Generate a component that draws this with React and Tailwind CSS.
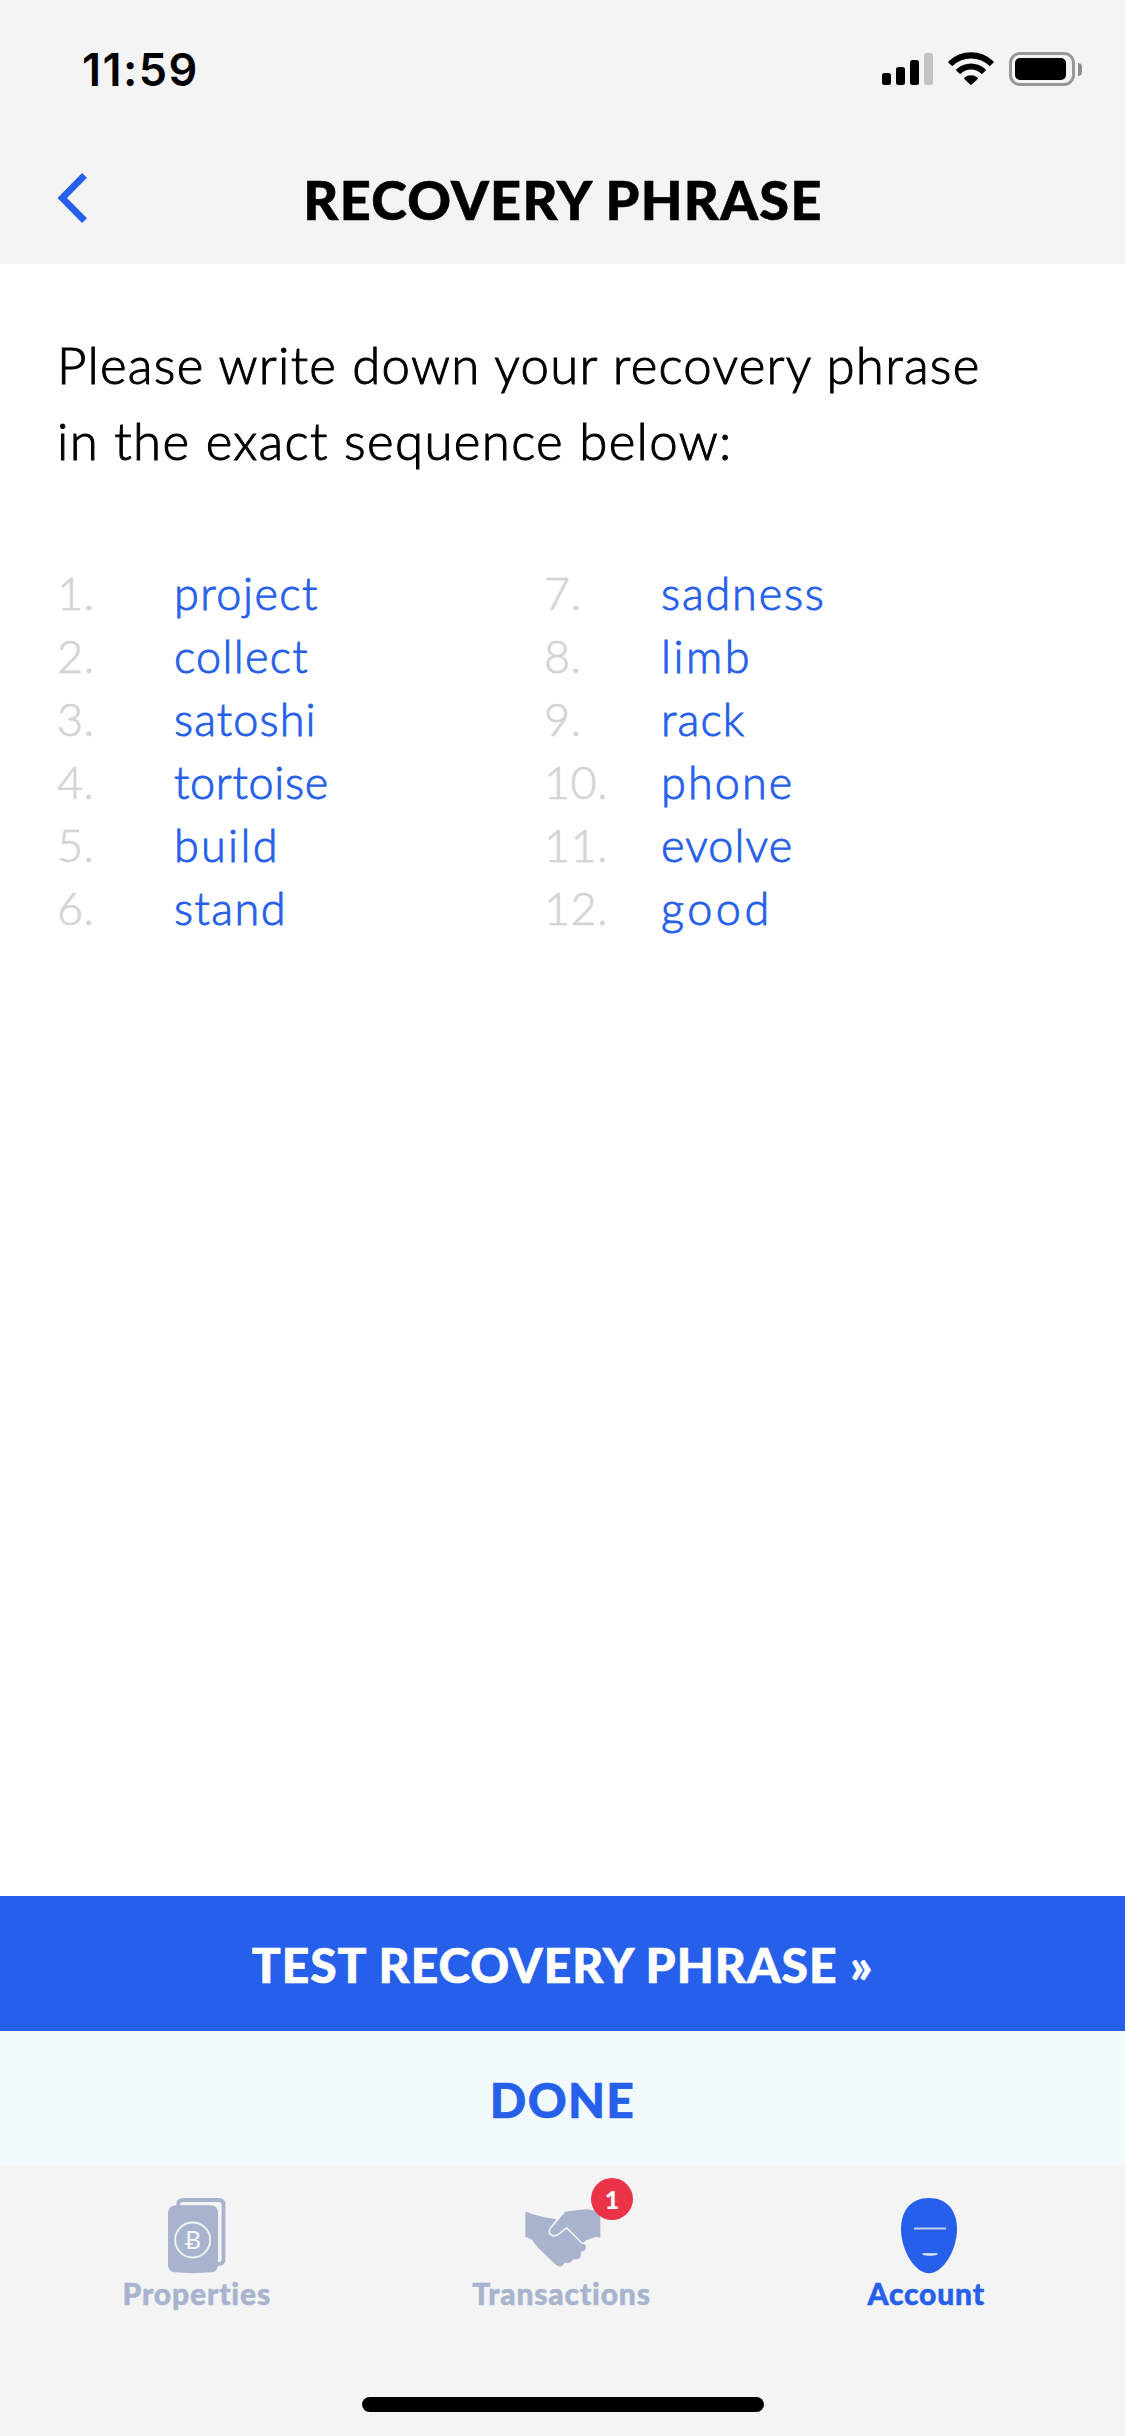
const leftWords = [
  { n: "1.", word: "project", tracking: "tracking-[1.45px]" },
  { n: "2.", word: "collect", tracking: "tracking-[1.3px]" },
  { n: "3.", word: "satoshi", tracking: "tracking-[1.1px]" },
  { n: "4.", word: "tortoise", tracking: "tracking-[0.7px]" },
  { n: "5.", word: "build", tracking: "tracking-[2.3px]" },
  { n: "6.", word: "stand", tracking: "tracking-[1.4px]" },
];

const rightWords = [
  { n: "7.", word: "sadness", tracking: "tracking-[1.8px]" },
  { n: "8.", word: "limb", tracking: "tracking-[2.5px]" },
  { n: "9.", word: "rack", tracking: "tracking-[1.1px]" },
  { n: "10.", word: "phone", tracking: "tracking-[2.1px]" },
  { n: "11.", word: "evolve", tracking: "tracking-[1.1px]" },
  { n: "12.", word: "good", tracking: "tracking-[3.5px]" },
];

function StatusBar() {
  return (
    <div className="flex h-[132px] items-start justify-between pl-[82px] pr-[43px]">
      <span className="mt-[43px] font-['Inter',sans-serif] text-[45px] leading-[54px] font-semibold tracking-[1.45px]">
        11:59
      </span>
      <div className="mt-[52px] flex h-[34px] items-start">
        <div className="flex h-[33px] items-end gap-[5px]">
          <span className="h-3 w-[9px] rounded-[2.5px] bg-black" />
          <span className="h-[18px] w-[9px] rounded-[2.5px] bg-black" />
          <span className="h-[25px] w-[9px] rounded-[2.5px] bg-black" />
          <span className="h-8 w-[9px] rounded-[2.5px] bg-[#c4c4c4]" />
        </div>
        <svg className="ml-[15px] h-[33px] w-[46px]" viewBox="0 0 46 33">
          <path d="M0.6 9.2a32.4 32.4 0 0 1 44.8 0q.8.8 0 1.6l-2.9 2.8q-.8.8-1.6 0a25.8 25.8 0 0 0-35.8 0q-.8.8-1.6 0L.6 10.8q-.8-.8 0-1.6z" />
          <path d="M8.5 17.2a21 21 0 0 1 29 0q.8.8 0 1.6l-2.9 2.8q-.8.8-1.6 0a14.5 14.5 0 0 0-20 0q-.8.8-1.6 0l-2.9-2.8q-.8-.8 0-1.6z" />
          <path d="M16.6 25.600a9.8 9.8 0 0 1 12.8 0q.8.8 0 1.6l-5.6 5.3q-.8.6-1.6 0l-5.6-5.3q-.8-.8 0-1.6z" />
        </svg>
        <div className="ml-[15px] flex items-center">
          <div className="h-[34px] w-[66px] rounded-[11px] border-3 border-[#979797] p-[3px]">
            <div className="h-[22px] w-[51px] rounded-[5px] bg-black" />
          </div>
          <div className="ml-[3px] h-[13px] w-1 rounded-r-full bg-[#8c8c8c]" />
        </div>
      </div>
    </div>
  );
}

function Header() {
  return (
    <header className="h-[264px] bg-[#f4f4f4]">
      <StatusBar />
      <div className="flex h-[132px] items-center pl-[57px] pr-[86px]">
        <svg className="h-[50px] w-[30px] shrink-0 fill-[#265fe9]" viewBox="0 0 30 50">
          <path d="M25 0l5 4.700L10 25l20 20.300L25 50 .5 25z" />
        </svg>
        <h1 className="flex-1 pt-[3px] text-center text-[54px] leading-[66px] font-black tracking-[1.3px] [-webkit-text-stroke:0.6px_black]">
          RECOVERY PHRASE
        </h1>
      </div>
    </header>
  );
}

function WordList({ items }) {
  return (
    <ol className="w-[487px]">
      {items.map(({ n, word, tracking }) => (
        <li key={n} className="flex h-[63px] text-[45px] leading-[63px] font-light">
          <span className="w-[117px] tracking-[0.4px] text-[#d4d4d4] [-webkit-text-stroke:0.7px_#d4d4d4]">{n}</span>
          <span className={`text-[#265fe9] [-webkit-text-stroke:0.9px_#265fe9] ${tracking}`}>{word}</span>
        </li>
      ))}
    </ol>
  );
}

function BookIcon() {
  return (
    <svg className="ml-px h-[76px] w-[58px]" viewBox="206 113 174 228">
      <path
        d="M237 137V133Q237 119 250 119H358Q372.500 119 372.500 133V298Q372.500 311 356 311"
        fill="none"
        stroke="#a8b4ce"
        strokeWidth="11.500"
      />
      <path
        d="M228 135H335Q356 137 356 158V316Q354 334 337 336Q281 341 226 336Q208 334 206 316V156Q208 137 228 135Z"
        fill="#a8b4ce"
      />
      <circle cx="280" cy="239" r="52.500" fill="none" stroke="#f4f4f4" strokeWidth="5.500" />
      <text x="258" y="266" fill="#f4f4f4" className="font-['Lato',sans-serif] text-[73px] font-normal">
        B
      </text>
      <path d="M256 251H281" stroke="#f4f4f4" strokeWidth="5" />
    </svg>
  );
}

function HandshakeIcon() {
  return (
    <svg className="ml-px h-[76px] w-[76px]" viewBox="224 113 228 228" fill="#a8b4ce">
      <path d="M225 154Q234 155 243 160Q280 172 318 177L299 202Q290 214 298 224Q312 235 329 222L348 205L394 250Q404 250 407 257Q408 268 400 272Q393 273 391 276Q394 289 386 295Q378 298 369 296Q366 303 358 307Q350 309 343 307Q338 318 328 318Q320 317 314 311L265 264Q252 250 245 238Q237 235 233 232Q229 230 225 231Z" />
      <path d="M345 154Q378 150 408 147Q430 148 450 157V233Q441 229 432 231Q412 237 397 247L349 199L323 220Q311 227 303 221Q296 213 302 205Z" />
    </svg>
  );
}

function FaceIcon() {
  return (
    <svg className="ml-[2px] h-[76px] w-[58px]" viewBox="179 113 174 228">
      <path
        d="M266 113C320 113 350 151 350 206C350 270 307 339 266 339C224 339 182 270 182 206C182 151 212 113 266 113Z"
        fill="#265fe9"
      />
      <path d="M221 204.500H317" stroke="#c3cde6" strokeWidth="6" />
      <path d="M245 279H293L289 284Q268 289 249 284Z" fill="#e9edf5" />
    </svg>
  );
}

function TabBar() {
  const label = "pt-px text-[30px] leading-9 font-black";
  return (
    <nav className="h-[270px] bg-[#f4f4f4] pt-8">
      <div className="grid grid-cols-3 px-[14px]">
        <div className="flex flex-col items-center">
          <BookIcon />
          <span className={`${label} tracking-[0.87px] text-[#a8b4ce] [-webkit-text-stroke:0.5px_#a8b4ce]`}>
            Properties
          </span>
        </div>
        <div className="flex flex-col items-center">
          <div className="relative">
            <HandshakeIcon />
            <span className="absolute -top-5 -right-[32px] flex h-[42px] w-[42px] items-center justify-center rounded-full bg-[#ea3346] text-[25px] leading-none font-black text-white">
              1
            </span>
          </div>
          <span className={`${label} pr-[2px] tracking-[0.83px] text-[#a8b4ce] [-webkit-text-stroke:0.5px_#a8b4ce]`}>
            Transactions
          </span>
        </div>
        <div className="flex flex-col items-center">
          <FaceIcon />
          <span className={`${label} pr-1 tracking-[0.84px] text-[#265fe9] [-webkit-text-stroke:0.5px_#265fe9]`}>
            Account
          </span>
        </div>
      </div>
      <div className="mx-auto mt-[86px] h-[15px] w-[402px] rounded-full bg-black" />
    </nav>
  );
}

export default function App() {
  return (
    <div className="flex h-[2436px] w-[1125px] flex-col overflow-hidden bg-white font-['Lato',sans-serif] text-black">
      <Header />
      <main className="flex-1 pt-[63px] pl-[57px]">
        <p className="text-[51px] leading-[76px] font-light [-webkit-text-stroke:1px_black]">
          <span className="block tracking-[1.25px]">Please write down your recovery phrase</span>
          <span className="block tracking-[1.35px]">in the exact sequence below:</span>
        </p>
        <div className="mt-[83px] flex">
          <WordList items={leftWords} />
          <WordList items={rightWords} />
        </div>
      </main>
      <button className="h-[135px] bg-[#265fe9] pt-[3px] text-[48px] leading-none font-black tracking-[0.98px] text-white [-webkit-text-stroke:0.6px_white]">
        TEST RECOVERY PHRASE »
      </button>
      <button className="h-[135px] bg-[#f2fafd] pt-[3px] text-[48px] leading-none font-black tracking-[1.3px] text-[#265fe9] [-webkit-text-stroke:0.6px_#265fe9]">
        DONE
      </button>
      <TabBar />
    </div>
  );
}
